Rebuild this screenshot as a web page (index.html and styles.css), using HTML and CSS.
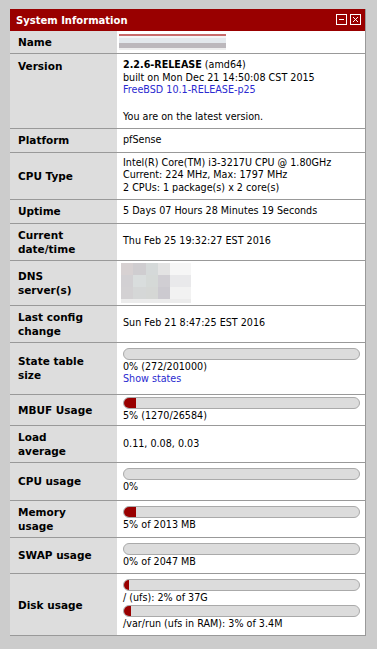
FILE: index.html
```html
<!DOCTYPE html>
<html lang="en">
<head>
  <meta charset="UTF-8">
  <title>System Information</title>
  <link rel="stylesheet" href="styles.css">
</head>
<body>
  <div class="panel">
    <div class="panel-head">
      <span class="panel-title">System Information</span>
      <span class="tools">
        <svg class="tool" width="11" height="11" viewBox="0 0 11 11"><rect x="0.5" y="0.5" width="10" height="10" fill="none" stroke="#fff"/><path d="M3 5.5h5" stroke="#fff"/></svg>
        <svg class="tool" width="11" height="11" viewBox="0 0 11 11"><rect x="0.5" y="0.5" width="10" height="10" fill="none" stroke="#fff"/><path d="M3 3l5 5M8 3l-5 5" stroke="#fff"/></svg>
      </span>
    </div>
    <table class="info">
      <tr>
        <th>Name</th>
        <td class="name"><div class="blur-name"></div></td>
      </tr>
      <tr>
        <th class="top">Version</th>
        <td>
          <b>2.2.6-RELEASE</b> (amd64)<br>
          built on Mon Dec 21 14:50:08 CST 2015<br>
          <a href="#">FreeBSD 10.1-RELEASE-p25</a><br>
          <div class="gap"></div>
          You are on the latest version.
        </td>
      </tr>
      <tr>
        <th>Platform</th>
        <td>pfSense</td>
      </tr>
      <tr>
        <th>CPU Type</th>
        <td class="cpu-type">
          Intel(R) Core(TM) i3-3217U CPU @ 1.80GHz<br>
          Current: 224 MHz, Max: 1797 MHz<br>
          2 CPUs: 1 package(s) x 2 core(s)
        </td>
      </tr>
      <tr>
        <th>Uptime</th>
        <td>5 Days 07 Hours 28 Minutes 19 Seconds</td>
      </tr>
      <tr>
        <th>Current date/time</th>
        <td>Thu Feb 25 19:32:27 EST 2016</td>
      </tr>
      <tr>
        <th>DNS server(s)</th>
        <td class="dns">
          <div class="blur-dns">
            <span class="r1"></span>
            <span class="r2"></span>
            <span class="r3"></span>
          </div>
        </td>
      </tr>
      <tr>
        <th>Last config change</th>
        <td>Sun Feb 21 8:47:25 EST 2016</td>
      </tr>
      <tr>
        <th>State table size</th>
        <td class="state">
          <div class="bar"><div class="bar-fill" style="width:0%"></div></div>
          0% (272/201000)<br>
          <a href="#">Show states</a>
        </td>
      </tr>
      <tr class="tight">
        <th>MBUF Usage</th>
        <td>
          <div class="bar"><div class="bar-fill" style="width:5%"></div></div>
          5% (1270/26584)
        </td>
      </tr>
      <tr>
        <th>Load average</th>
        <td>0.11, 0.08, 0.03</td>
      </tr>
      <tr>
        <th>CPU usage</th>
        <td class="cpu">
          <div class="bar"><div class="bar-fill" style="width:0%"></div></div>
          0%
        </td>
      </tr>
      <tr>
        <th>Memory usage</th>
        <td>
          <div class="bar"><div class="bar-fill" style="width:5%"></div></div>
          5% of 2013 MB
        </td>
      </tr>
      <tr>
        <th>SWAP usage</th>
        <td>
          <div class="bar"><div class="bar-fill" style="width:0%"></div></div>
          0% of 2047 MB
        </td>
      </tr>
      <tr>
        <th>Disk usage</th>
        <td>
          <div class="bar"><div class="bar-fill" style="width:2%"></div></div>
          / (ufs): 2% of 37G
          <div class="bar"><div class="bar-fill" style="width:3%"></div></div>
          /var/run (ufs in RAM): 3% of 3.4M
        </td>
      </tr>
    </table>
  </div>
</body>
</html>
```

FILE: styles.css
```css
body { margin: 0; padding: 9px 11px 0 10px; background: #cccccc; font-family: "DejaVu Sans", Verdana, sans-serif; color: #000; }
.panel { background: #fff; border-right: 1px solid #999; border-bottom: 1px solid #999; }
.panel-head { display: flex; align-items: center; justify-content: space-between; height: 22px; padding: 0 4px 0 6px; background: #990000; color: #fff; font-weight: bold; font-size: 10px; }
.tools { display: flex; gap: 3px; margin-top: -1px; }
.tool { display: block; }
table.info { width: 100%; border-collapse: collapse; }
.info th { width: 76px; text-align: left; vertical-align: middle; background: #dddddd; font-size: 10.5px; line-height: 14px; padding: 4px 23px 4px 8px; }
.info th.top { vertical-align: top; padding-top: 5px; }
.info td { font-size: 9.6px; line-height: 12.5px; padding: 5px 5px 5px 6px; vertical-align: middle; }
.info tr + tr th, .info tr + tr td { border-top: 1px solid #999; }
.info tr.tight td { padding-top: 2px; padding-bottom: 3px; }
.info td.name { padding-top: 2px; padding-bottom: 2px; }
.info td.cpu-type { padding-top: 4px; padding-bottom: 5px; }
.info td.dns { padding-top: 2px; padding-bottom: 2px; }
.info td.state { padding-bottom: 8px; }
.info td.cpu { padding-bottom: 6px; }
.info a { color: #2a2ad0; text-decoration: none; }
.gap { height: 14px; }
.bar { height: 10px; border: 1px solid #aaa; border-radius: 7px; background: #dcdcdc; overflow: hidden; margin: 0 0 1px; }
.bar-fill { height: 100%; background: #990000; }
.blur-name { width: 107px; height: 16px; margin-left: -4px; background: linear-gradient(#c86a6a 0 2px, #f4f5f6 2px 4px, #e3e8ec 4px 9px, #bcb8bc 9px 14px, #eeeeee 14px 16px); }
.blur-dns { width: 70px; height: 40px; margin-left: -2px; display: flex; flex-direction: column; background: #ececec; }
.blur-dns span { display: block; height: 12px; }
.blur-dns .r1 { background: linear-gradient(90deg, #d7d1d2 0 12px, #cfcdd0 12px 25px, #d5d9d9 25px 37px, #e3e3e3 37px 49px, #f6f6f6 49px); }
.blur-dns .r2 { background: linear-gradient(90deg, #d2d0d3 0 12px, #d9dddd 12px 25px, #d5d9d7 25px 37px, #d0ced3 37px 49px, #e9e9eb 49px); }
.blur-dns .r3 { background: linear-gradient(90deg, #d3d1d3 0 12px, #d5d7d7 12px 25px, #d5d7d5 25px 37px, #cccad0 37px 49px, #f2f2f2 49px); }
```
